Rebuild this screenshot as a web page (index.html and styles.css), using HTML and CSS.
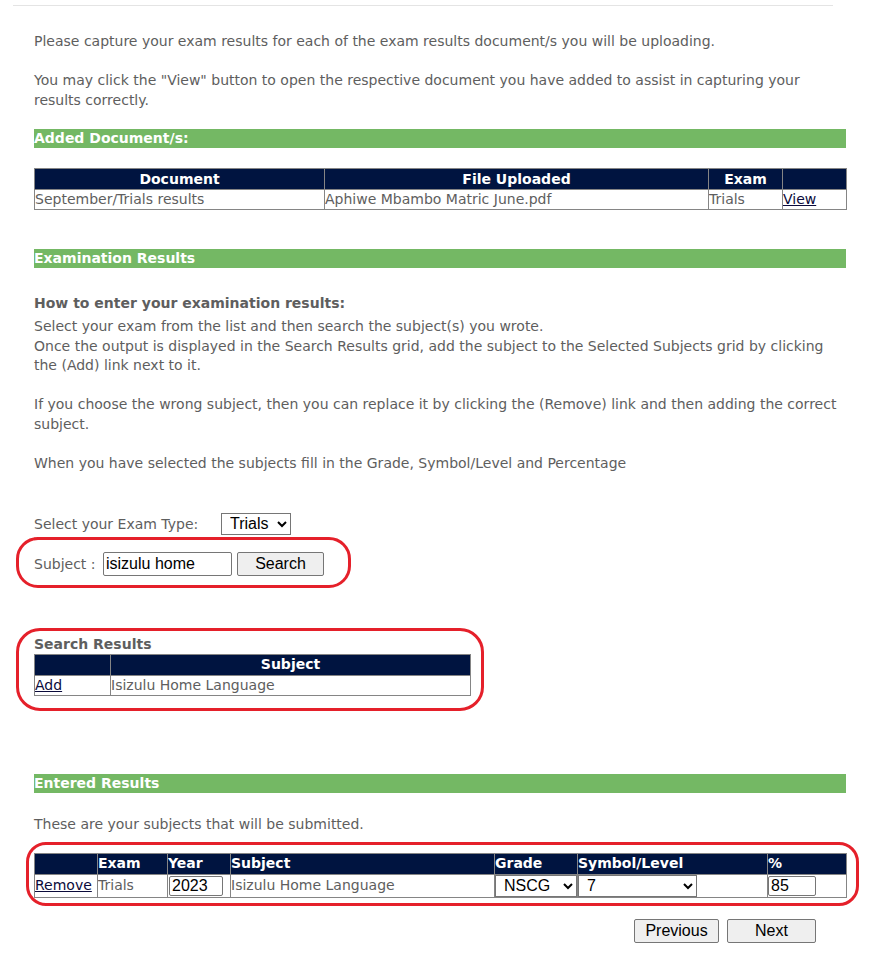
FILE: index.html
```html
<!DOCTYPE html>
<html>
<head>
<meta charset="utf-8">
<link rel="stylesheet" href="styles.css">
</head>
<body>
<div class="topline"></div>
<div class="content">
  <p class="p1">Please capture your exam results for each of the exam results document/s you will be uploading.</p>
  <p class="p2">You may click the "View" button to open the respective document you have added to assist in capturing your results correctly.</p>

  <div class="bar bar1">Added Document/s:</div>
  <table class="grid docs">
    <colgroup><col class="c-doc"><col class="c-file"><col class="c-exam"><col class="c-view"></colgroup>
    <tr class="hd center"><th>Document</th><th>File Uploaded</th><th>Exam</th><th></th></tr>
    <tr><td>September/Trials results</td><td>Aphiwe Mbambo Matric June.pdf</td><td>Trials</td><td><a href="#">View</a></td></tr>
  </table>

  <div class="bar bar2">Examination Results</div>
  <div class="howto">
    <div class="howto-title">How to enter your examination results:</div>
    <div class="howto-text">Select your exam from the list and then search the subject(s) you wrote.<br>Once the output is displayed in the Search Results grid, add the subject to the Selected Subjects grid by clicking the (Add) link next to it.<br><br>If you choose the wrong subject, then you can replace it by clicking the (Remove) link and then adding the correct subject.<br><br>When you have selected the subjects fill in the Grade, Symbol/Level and Percentage</div>
  </div>

  <div class="examrow">
    <span class="examlabel">Select your Exam Type:</span>
    <select class="ctl sel-exam"><option>Trials</option></select>
  </div>
  <div class="subjectrow">
    <span class="subjlabel">Subject :</span>
    <input class="ctl inp-subj" type="text" value="isizulu home">
    <button class="btn btn-search">Search</button>
    <div class="ring ring1"></div>
  </div>

  <div class="searchres">
    <div class="sr-title">Search Results</div>
    <table class="grid srtable">
      <colgroup><col class="c-add"><col class="c-subj"></colgroup>
      <tr class="hd center"><th></th><th>Subject</th></tr>
      <tr><td><a href="#">Add</a></td><td>Isizulu Home Language</td></tr>
    </table>
    <div class="ring ring2"></div>
  </div>

  <div class="bar bar3">Entered Results</div>
  <p class="p3">These are your subjects that will be submitted.</p>
  <div class="entered">
    <table class="grid ertable">
      <colgroup><col class="e1"><col class="e2"><col class="e3"><col class="e4"><col class="e5"><col class="e6"><col class="e7"></colgroup>
      <tr class="hd left"><th></th><th>Exam</th><th>Year</th><th>Subject</th><th>Grade</th><th>Symbol/Level</th><th>%</th></tr>
      <tr class="er-row">
        <td><a href="#">Remove</a></td>
        <td>Trials</td>
        <td><input class="ctl inp-year" type="text" value="2023"></td>
        <td>Isizulu Home Language</td>
        <td><select class="ctl sel-grade"><option>NSCG</option></select></td>
        <td><select class="ctl sel-sym"><option>7</option></select></td>
        <td><input class="ctl inp-pct" type="text" value="85"></td>
      </tr>
    </table>
    <div class="ring ring3"></div>
  </div>

  <div class="navbtns">
    <button class="btn btn-prev">Previous</button>
    <button class="btn btn-next">Next</button>
  </div>
</div>
</body>
</html>
```
FILE: styles.css
```css
html, body {
  margin: 0;
  padding: 0;
  background: #ffffff;
}
body {
  font-family: "DejaVu Sans", sans-serif;
  font-size: 14px;
  line-height: 20px;
  color: #5e5e5e;
}
.topline {
  margin: 5px 42px 0 13px;
  border-top: 1px solid #e4e4e4;
}
.content {
  padding: 0 29px 20px 34px;
}
p {
  margin: 0;
}
.p1 {
  margin-top: 25px;
}
.p2 {
  margin-top: 19px;
}
.bar {
  background: #74b864;
  color: #ffffff;
  font-weight: bold;
  height: 19px;
  line-height: 19px;
  white-space: nowrap;
}
.bar1 { margin-top: 19px; }
.bar2 { margin-top: 39px; }
.bar3 { margin-top: 78px; }

table.grid {
  border-collapse: collapse;
  table-layout: fixed;
  border: 1px solid #858585;
}
.grid th, .grid td {
  border: 1px solid #858585;
  padding: 0;
  white-space: nowrap;
  overflow: hidden;
}
.grid .hd th {
  background: #001440;
  color: #ffffff;
  font-weight: bold;
  height: 20px;
  line-height: 19px;
}
.grid .hd.center th { text-align: center; }
.grid .hd.left th { text-align: left; }
.grid td {
  height: 19px;
  line-height: 19px;
  color: #5e5e5e;
}
.grid a {
  color: #0b0b3b;
  text-decoration: underline;
}

.docs {
  width: 812px;
  margin-top: 20px;
}
.c-doc { width: 290px; }
.c-file { width: 384px; }
.c-exam { width: 74px; }
.c-view { width: 64px; }

.howto {
  margin-top: 25px;
}
.howto-title {
  font-weight: bold;
  line-height: 20px;
}
.howto-text {
  margin-top: 4px;
  line-height: 19.6px;
}

.ctl {
  font-family: Arial, "Liberation Sans", sans-serif;
  font-size: 16px;
  color: #000000;
  box-sizing: border-box;
}
input.ctl {
  border: 1px solid #767676;
  border-radius: 2px;
  padding: 0 2px;
  background: #fff;
}
select.ctl {
  border: 1px solid #767676;
  border-radius: 0;
  background: #fff;
  padding: 0 0 0 4px;
}

.examrow {
  margin-top: 39px;
  display: flex;
  align-items: center;
  height: 22px;
}
.examlabel {
  width: 187px;
}
.sel-exam {
  width: 70px;
  height: 22px;
}
.subjectrow {
  position: relative;
  margin-top: 17px;
  display: flex;
  align-items: center;
  height: 24px;
}
.subjlabel {
  width: 69px;
}
.inp-subj {
  width: 129px;
  height: 24px;
}
.btn {
  font-family: Arial, "Liberation Sans", sans-serif;
  font-size: 16px;
  color: #000;
  background: #efefef;
  border: 1px solid #767676;
  border-radius: 2px;
  height: 24px;
  padding: 0;
  box-sizing: border-box;
}
.btn-search {
  margin-left: 5px;
  width: 87px;
}

.ring {
  position: absolute;
  border: 3px solid #e5202a;
  box-sizing: border-box;
  pointer-events: none;
}
.ring1 {
  left: -18px;
  top: -15px;
  width: 335px;
  height: 51px;
  border-radius: 22px;
}
.searchres {
  position: relative;
  margin-top: 58px;
  width: 437px;
}
.sr-title {
  font-weight: bold;
  line-height: 20px;
}
.srtable {
  width: 437px;
}
.c-add { width: 76px; }
.c-subj { width: 360px; }
.ring2 {
  left: -18px;
  top: -6px;
  width: 468px;
  height: 83px;
  border-radius: 24px;
}

.p3 {
  margin-top: 21px;
}
.entered {
  position: relative;
  margin-top: 19px;
}
.ertable {
  width: 812px;
}
.e1 { width: 63px; }
.e2 { width: 70px; }
.e3 { width: 63px; }
.e4 { width: 264px; }
.e5 { width: 83px; }
.e6 { width: 190px; }
.e7 { width: 79px; }
.er-row td {
  height: 21px;
  line-height: 21px;
}
.inp-year {
  width: 54px;
  height: 20px;
  display: block;
  margin-left: 1px;
}
.sel-grade {
  width: 82px;
  height: 22px;
  display: block;
}
.sel-sym {
  width: 119px;
  height: 22px;
  display: block;
}
.inp-pct {
  width: 48px;
  height: 20px;
  display: block;
}
.ring3 {
  left: -8px;
  top: -11px;
  width: 833px;
  height: 64px;
  border-radius: 20px;
}

.navbtns {
  display: flex;
  justify-content: flex-end;
  gap: 8px;
  margin-top: 21px;
  padding-right: 30px;
}
.btn-prev { width: 85px; }
.btn-next { width: 89px; }
```
